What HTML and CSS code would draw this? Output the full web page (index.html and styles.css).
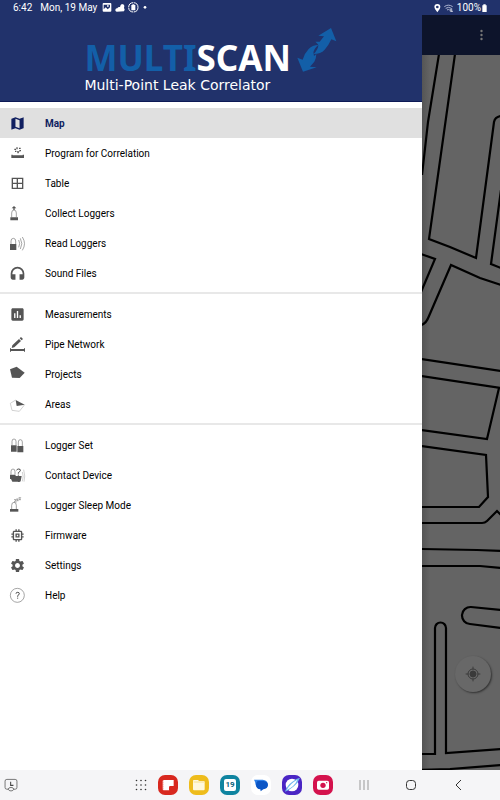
FILE: index.html
```html
<!DOCTYPE html>
<html lang="en">
<head>
    <meta charset="UTF-8">
    <meta name="viewport" content="width=device-width, initial-scale=1.0">
    <title>MultiScan</title>
    <link rel="stylesheet" href="styles.css">
</head>
<body>

    <div class="status-bar">
        <span class="clock">6:42</span>
        <span class="date">Mon, 19 May</span>
        <svg class="status-left" viewBox="0 0 141 33" fill="#fff">
            <path fill-rule="evenodd" d="M5 3h20q3 0 3 3v20q0 3-3 3H5q-3 0-3-3V6q0-3 3-3zm0 5v14l6-6 6 6 7-6V8zm10 2h5v4h-5z"/>
            <path d="M44 29q-5-1-4-6 1-4 6-4 2-5 8-4l2-6 4-3 6 2 1 5-1 5q4 4 0 10z"/>
            <circle cx="94" cy="16" r="14" fill="none" stroke="#fff" stroke-width="3" stroke-dasharray="20 2"/>
            <path d="M88 9h3V7h6v2h3v16H88z"/>
            <circle cx="129" cy="16" r="4"/>
        </svg>
        <svg class="status-right" viewBox="0 0 60 30" fill="#fff">
            <path fill-rule="evenodd" d="M10 3a9 9 0 0 1 9 9q0 6-9 16Q1 18 1 12a9 9 0 0 1 9-9zm0 5a4 4 0 1 0 0 8 4 4 0 0 0 0-8z"/>
            <path d="M31 11q12-9 25 0M35 16q9-6 17 0M39 21q4-3 8 0" fill="none" stroke="#aeb6d2" stroke-width="3"/>
            <path d="M49 18v7h8M53 16v10" fill="none" stroke="#fff" stroke-width="2"/>
        </svg>
        <span>100%</span>
        <svg class="battery" viewBox="0 0 15 30" fill="#fff"><path d="M4 4h7v3h3v20H1V7h3z"/></svg>
    </div>

    <div class="screen">
        <aside class="drawer">
            <header class="brand">
                <div class="brand-title">
                    <span class="multi">MULTI</span>
                    <span class="scan">SCAN</span>
                    <svg class="brand-arrows" viewBox="0 0 118 132" fill="#135fa8">
                        <path d="M101 0l16 40-15-6q-9 20-20 31-12 13-33 13 14-14 14-26l-2-4-7-7h13l13-16-17-2z"/>
                        <path d="M17 131L0 89l16 6q6-20 18-32 11-12 29-12-17 14-14 26l1 7 7-6q0 12-6 23l-13 15 20 2z"/>
                    </svg>
                </div>
                <div class="brand-subtitle">Multi-Point Leak Correlator</div>
            </header>

            <nav class="menu">
                <ul class="menu-group">
                    <li><a class="menu-item active" href="#map">
                        <svg class="icon" viewBox="1 1 22 22"><path d="M20.5 3l-.16.03L15 5.1 9 3 3.36 4.9c-.21.07-.36.25-.36.48V20.5c0 .28.22.5.5.5l.16-.03L9 18.9l6 2.1 5.64-1.9c.21-.07.36-.25.36-.48V3.5c0-.28-.22-.5-.5-.5zM15 19l-6-2.11V5l6 2.11V19z"/></svg>
                        Map</a></li>
                    <li><a class="menu-item" href="#program">
                        <svg class="icon" viewBox="0 0 45 45"><path d="M4 26h4v2h30v-2h4v10H4zM20 16h9l-5 7zM13 8h5v4h-5zM19 4h4v6h-4zM27 5h5v4h-5zM15 14h4v4h-4zM28 12h5v4h-5z"/></svg>
                        Program for Correlation</a></li>
                    <li><a class="menu-item" href="#table">
                        <svg class="icon line" viewBox="0 0 45 45"><path stroke-width="4" d="M7 7h31v30H7zM22 7v30M7 22h31"/></svg>
                        Table</a></li>
                    <li><a class="menu-item" href="#collect">
                        <svg class="icon" viewBox="0 0 45 45"><path d="M12 0l7 7h-5v5h-4V7H5zM1 34h23v9H1z"/><path class="thin" d="M5 35V21q0-9 7-9t7 9v14"/></svg>
                        Collect Loggers</a></li>
                    <li><a class="menu-item" href="#read">
                        <svg class="icon" viewBox="0 0 45 45"><path d="M0 24h19v18H0z"/><path class="thin" d="M3 24v-9q0-8 7-8t7 8v9M26 12q6 10 0 22M31 7q9 16 0 32M37 3q13 20 0 40"/></svg>
                        Read Loggers</a></li>
                    <li><a class="menu-item" href="#sound">
                        <svg class="icon" viewBox="2 1 20 22"><path d="M12 2a10 10 0 0 0-10 10v6c0 1.66 1.34 3 3 3h4v-8H4.500v-1a7.500 7.500 0 0 1 15 0v1H15v8h4c1.660 0 3-1.340 3-3v-6A10 10 0 0 0 12 2z"/></svg>
                        Sound Files</a></li>
                </ul>
                <ul class="menu-group">
                    <li><a class="menu-item" href="#measurements">
                        <svg class="icon" viewBox="1 1 22 22"><path d="M19 3H5c-1.1 0-2 .9-2 2v14c0 1.1.9 2 2 2h14c1.1 0 2-.9 2-2V5c0-1.1-.9-2-2-2zM9 17H7v-7h2v7zm4 0h-2V7h2v10zm4 0h-2v-4h2v4z"/></svg>
                        Measurements</a></li>
                    <li><a class="menu-item" href="#pipes">
                        <svg class="icon" viewBox="0 0 45 45"><path d="M7 25L27 6l6 6-20 19-8 2zM29 4l4-4 6 6-4 4zM0 34h3v2h39v-2h3v10h-3v-2H3v2H0z"/></svg>
                        Pipe Network</a></li>
                    <li><a class="menu-item" href="#projects">
                        <svg class="icon" viewBox="0 0 45 45"><path d="M0 7L20-1l24 18-15 16-23-1z"/></svg>
                        Projects</a></li>
                    <li><a class="menu-item" href="#areas">
                        <svg class="icon" viewBox="0 0 45 45"><path d="M17 9l27 14-24 4z"/><path class="faint" d="M17 9L1 19l5 21 22 3 16-20"/></svg>
                        Areas</a></li>
                </ul>
                <ul class="menu-group">
                    <li><a class="menu-item" href="#loggerset">
                        <svg class="icon" viewBox="0 0 45 45"><path d="M3 22h17v19H3zM22 24h18v19H22z"/><path class="thin" d="M6 22V10q0-7 6-7t6 7v12M25 24V12q0-7 6-7t6 7v12"/></svg>
                        Logger Set</a></li>
                    <li><a class="menu-item" href="#contact">
                        <svg class="icon" viewBox="0 0 45 45"><path d="M0 20h15l3 4h17l-3 16q-3 3-9 1H7l-4-8H0z"/><path class="thin" d="M3 20v-9q0-8 6-8t6 8v9"/><path class="faint" d="M37 12q5 12 0 28M41 5q6 20 1 36"/><path class="question" d="M20 7q1-4 6-4 6 0 5 5-1 3-6 6v3M25 20v3"/></svg>
                        Contact Device</a></li>
                    <li><a class="menu-item" href="#sleep">
                        <svg class="icon" viewBox="0 0 45 45"><path d="M0 33h25v8H0z"/><path class="thin" d="M5 33V22q0-9 7-9t7 9v11M12 5h7l-6 7h7M19 3h6l-5 5h6M26-1h6l-5 6h6"/></svg>
                        Logger Sleep Mode</a></li>
                    <li><a class="menu-item" href="#firmware">
                        <svg class="icon" viewBox="1 1 22 22"><path d="M15 9H9v6h6V9zm-2 4h-2v-2h2v2zm8-2V9h-2V7c0-1.1-.9-2-2-2h-2V3h-2v2h-2V3H9v2H7c-1.1 0-2 .9-2 2v2H3v2h2v2H3v2h2v2c0 1.1.9 2 2 2h2v2h2v-2h2v2h2v-2h2c1.1 0 2-.9 2-2v-2h2v-2h-2v-2h2zm-4 6H7V7h10v10z"/></svg>
                        Firmware</a></li>
                    <li><a class="menu-item" href="#settings">
                        <svg class="icon" viewBox="1 1 22 22"><path d="M19.14 12.94c.04-.3.06-.61.06-.94 0-.32-.02-.64-.07-.94l2.03-1.58c.18-.14.23-.41.12-.61l-1.92-3.32c-.12-.22-.37-.29-.59-.22l-2.39.96c-.5-.38-1.03-.7-1.62-.94l-.36-2.54c-.04-.24-.24-.41-.48-.41h-3.84c-.24 0-.43.17-.47.41l-.36 2.54c-.59.24-1.13.57-1.62.94l-2.39-.96c-.22-.08-.47 0-.59.22L2.74 8.87c-.12.21-.08.47.12.61l2.03 1.58c-.05.3-.09.63-.09.94s.02.64.07.94l-2.03 1.58c-.18.14-.23.41-.12.61l1.92 3.32c.12.22.37.29.59.22l2.39-.96c.5.38 1.03.7 1.62.94l.36 2.54c.05.24.24.41.48.41h3.84c.24 0 .44-.17.47-.41l.36-2.54c.59-.24 1.13-.56 1.62-.94l2.39.96c.22.08.47 0 .59-.22l1.92-3.32c.12-.22.07-.47-.12-.61l-2.01-1.58zM12 15.6c-1.98 0-3.6-1.62-3.6-3.6s1.62-3.6 3.6-3.6 3.6 1.62 3.6 3.6-1.62 3.6-3.6 3.6z"/></svg>
                        Settings</a></li>
                    <li><a class="menu-item" href="#help">
                        <svg class="icon" viewBox="0 0 45 45"><circle class="thin" cx="22" cy="22" r="21"/><path class="question" d="M18 17q0-4 5-4t5 4q0 3-5 6v3M23 29v3"/></svg>
                        Help</a></li>
                </ul>
            </nav>
        </aside>

        <main class="app">
            <div class="toolbar">
                <button class="more" aria-label="More options">
                    <svg viewBox="0 0 4 12"><circle cx="2" cy="2" r="1.2"/><circle cx="2" cy="6" r="1.2"/><circle cx="2" cy="10" r="1.2"/></svg>
                </button>
            </div>
            <div class="map">
                <svg class="streets" viewBox="422 55 78 715" preserveAspectRatio="xMinYMin slice">
                    <path d="M439 54L428 122 422 175"/>
                    <path d="M455 54L429 239l21 8 26 11 18-136q1-5 7-6"/>
                    <path d="M501 190l-10 74 10 4"/>
                    <path d="M421 254l14 5-14 33"/>
                    <path d="M501 285l-21-7-29-13-22 51q-3 8-8 9"/>
                    <path d="M421 359l80 12"/>
                    <path d="M421 376l80 12M499 388l-12 51-66-9"/>
                    <path d="M421 446l65 9 2 42-9 10h-58"/>
                    <path d="M421 523h61q3 0 5-2l10-10 4 4"/>
                    <path d="M421 549l56 1 24 1M421 566l59 0 21 2"/>
                    <path d="M501 610l-30-3a8 8 0 0 0-1 17l31 4"/>
                    <path d="M421 754h14V628a5 5 0 0 1 11 0v125l55-4"/>
                    <path d="M421 770l29-1 51-4"/>
                </svg>
                <button class="locate" aria-label="My location">
                    <svg viewBox="0 0 24 24"><circle cx="12" cy="12" r="4.5" fill="#3a3a3a"/><circle cx="12" cy="12" r="7.5"/><path d="M12 1v4M12 19v4M1 12h4M19 12h4"/></svg>
                </button>
            </div>
        </main>
    </div>

    <footer class="taskbar">
        <button class="recent" aria-label="Recent app">
            <svg viewBox="0 0 40 40" fill="none" stroke="#444" stroke-width="2"><rect x="3" y="4" width="34" height="28" rx="5"/><path d="M19 11v10h8" stroke-width="3"/><path d="M12 32q1-5 8-5t8 5q-2 5-8 5t-8-5z" fill="#f5f5f7"/></svg>
        </button>
        <div class="dock">
            <button class="apps" aria-label="Apps">
                <svg viewBox="0 0 12 12" fill="#333"><circle cx="1.5" cy="1.5" r=".8"/><circle cx="6" cy="1.5" r=".8"/><circle cx="10.5" cy="1.5" r=".8"/><circle cx="1.5" cy="6" r=".8"/><circle cx="6" cy="6" r=".8"/><circle cx="10.5" cy="6" r=".8"/><circle cx="1.5" cy="10.5" r=".8"/><circle cx="6" cy="10.5" r=".8"/><circle cx="10.5" cy="10.5" r=".8"/></svg>
            </button>
            <button class="dock-app flip" aria-label="Notes">
                <svg viewBox="0 0 60 60"><path fill="#fff" d="M17 15h30v20L35 46H17q-3 0-3-3V18q0-3 3-3z"/><path fill="#d8281f" d="M33 47V37q0-4 4-4h11v3L36 47z"/><path stroke="#d8281f" stroke-width="2" stroke-dasharray="3 3" d="M15 16v30"/></svg>
            </button>
            <button class="dock-app files" aria-label="My Files">
                <svg viewBox="0 0 60 60"><path fill="#fff8dc" d="M14 15h13l3 3h14q3 0 3 3v22q0 3-3 3H15q-3 0-3-3V18q0-3 2-3z"/><path stroke="#f3d565" stroke-width="2" d="M14 21h31"/></svg>
            </button>
            <button class="dock-app calendar" aria-label="Calendar"><span class="day">19</span></button>
            <button class="dock-app messages" aria-label="Messages">
                <svg viewBox="0 0 60 60"><path fill="#2f80e8" d="M9 14h26q14 1 15 13 0 12-13 14H25q-9-2-11-11 0-8-5-16z"/><path fill="#0c56c6" d="M20 18h18q13 2 13 12-1 11-14 13l-8 6-1-6q-13-2-13-14 0-8 5-11z"/></svg>
            </button>
            <button class="dock-app internet" aria-label="Internet">
                <svg viewBox="0 0 60 60"><circle cx="30" cy="30" r="19" fill="#fff"/><path fill="#6fb7ee" d="M9 50Q15 31 31 20 44 10 54 8 48 24 36 34 22 46 9 50z"/><path fill="#fff" d="M14 45Q24 26 46 14 38 34 14 45z"/></svg>
            </button>
            <button class="dock-app camera" aria-label="Camera">
                <svg viewBox="0 0 60 60"><rect x="12" y="17" width="36" height="27" rx="5" fill="#fff"/><circle cx="30" cy="31" r="8" fill="#d4124d"/><circle cx="41" cy="23" r="2" fill="#d4124d"/></svg>
            </button>
        </div>
        <div class="system">
            <button aria-label="Recents"><svg viewBox="0 0 20 20" stroke="#999"><path d="M6 5v10M10 5v10M14 5v10"/></svg></button>
            <button aria-label="Home"><svg viewBox="0 0 20 20" fill="none" stroke="#333"><rect x="5.5" y="5.5" width="9" height="9" rx="3"/></svg></button>
            <button aria-label="Back"><svg viewBox="0 0 20 20" fill="none" stroke="#333"><path d="M13 5l-5 5 5 5"/></svg></button>
        </div>
    </footer>

</body>
</html>
```

FILE: styles.css
```css
:root {
    --brand-bg: #21326b;
    --brand-blue: #135fa8;
    --active: #101f60;
    --icon: #555555;
    --divider: #e8e8e8;
    --map-bg: #646464;
}

* {
    box-sizing: border-box;
}

body {
    margin: 0;
    height: 100vh;
    display: flex;
    flex-direction: column;
    font-family: Roboto, "Liberation Sans", sans-serif;
    font-size: 10px;
    background: #fff;
}

button {
    display: flex;
    align-items: center;
    justify-content: center;
    padding: 0;
    border: none;
    background: none;
    font-family: inherit;
    cursor: pointer;
}

svg {
    display: block;
}

/* Status bar */
.status-bar {
    display: flex;
    align-items: center;
    height: 15px;
    padding: 0 13px;
    background: var(--brand-bg);
    color: #fff;
}

.date {
    margin-left: 8px;
}

.status-left {
    width: 47px;
    height: 11px;
    margin-left: 5px;
}

.status-right {
    width: 20px;
    height: 10px;
    margin-left: auto;
    margin-right: 3px;
}

.battery {
    width: 5px;
    height: 10px;
    margin-left: 1px;
}

.screen {
    flex: 1;
    display: flex;
    min-height: 0;
}

/* Drawer */
.drawer {
    width: 84.4%;
    background: #fff;
    overflow: hidden;
}

.brand {
    height: 87px;
    padding: 12px 0 0 20%;
    background: var(--brand-bg);
    border-bottom: 1px solid #0d1a55;
}

.brand-title {
    display: flex;
    align-items: flex-end;
    font-family: "Noto Sans", sans-serif;
    font-weight: bold;
    font-size: 35px;
    line-height: 36px;
    height: 49px;
}

.multi {
    color: var(--brand-blue);
}

.scan {
    color: #fff;
}

.brand-arrows {
    width: 40px;
    height: 44px;
    margin-left: 6px;
    margin-bottom: 4px;
}

.brand-subtitle {
    font-family: "DejaVu Sans", sans-serif;
    font-size: 14px;
    line-height: 18px;
    color: #fff;
}

.menu {
    padding-top: 6px;
}

.menu-group {
    list-style: none;
    margin: 0;
    padding: 0;
}

.menu-group + .menu-group {
    margin-top: 4px;
    padding-top: 5px;
    border-top: 2px solid var(--divider);
}

.menu-item {
    display: flex;
    align-items: center;
    gap: 20px;
    height: 30px;
    padding: 0 10px;
    color: #000;
    text-decoration: none;
}

.menu-item.active {
    background: #e0e0e0;
    color: var(--active);
    font-weight: bold;
}

.icon {
    width: 15px;
    height: 15px;
    overflow: visible;
    fill: var(--icon);
}

.active .icon {
    fill: var(--active);
}

.icon.line {
    fill: none;
    stroke: var(--icon);
}

.thin,
.faint,
.question {
    fill: none;
    stroke: #777;
    stroke-width: 2;
}

.faint {
    stroke: #bbb;
}

.question {
    stroke: #444;
    stroke-width: 3;
}

/* Dimmed app behind the drawer */
.app {
    flex: 1;
    display: flex;
    flex-direction: column;
    min-width: 0;
}

.toolbar {
    display: flex;
    align-items: center;
    justify-content: flex-end;
    height: 40px;
    padding-right: 16px;
    background: #0d142b;
}

.more svg {
    width: 5px;
    height: 12px;
    fill: #777;
}

.map {
    position: relative;
    flex: 1;
    min-height: 0;
    background: linear-gradient(to right, #555, var(--map-bg) 8px);
}

.streets {
    width: 100%;
    height: 100%;
    fill: none;
    stroke: #000;
    stroke-width: 2.2;
}

.locate {
    position: absolute;
    right: 9px;
    bottom: 78px;
    width: 36px;
    height: 36px;
    border-radius: 50%;
    background: #686868;
    box-shadow: 1px 1px 2px rgba(0, 0, 0, 0.5);
}

.locate svg {
    width: 16px;
    height: 16px;
    fill: none;
    stroke: #3a3a3a;
    stroke-width: 1.5;
}

/* Taskbar */
.taskbar {
    display: flex;
    align-items: center;
    height: 30px;
    padding-left: 4px;
    background: #f5f5f7;
}

.recent svg {
    width: 14px;
    height: 14px;
}

.dock {
    display: flex;
    align-items: center;
    gap: 11px;
    margin-left: 23.6%;
}

.apps svg {
    width: 12px;
    height: 12px;
}

.dock-app {
    width: 20px;
    height: 20px;
    border-radius: 7px;
}

.dock-app svg {
    width: 20px;
    height: 20px;
}

.flip {
    background: #d8281f;
}

.files {
    background: #eebc1c;
}

.calendar {
    background: #0f84a0;
}

.day {
    width: 12px;
    height: 12px;
    border-radius: 2px;
    background: #fff;
    color: #0b6680;
    font-size: 8px;
    font-weight: bold;
    line-height: 12px;
}

.messages {
    background: #fff;
}

.internet {
    background: #4a25c4;
}

.camera {
    background: #d4124d;
}

.system {
    display: flex;
    gap: 27px;
    margin-left: 4.2%;
}

.system svg {
    width: 20px;
    height: 20px;
}
```
